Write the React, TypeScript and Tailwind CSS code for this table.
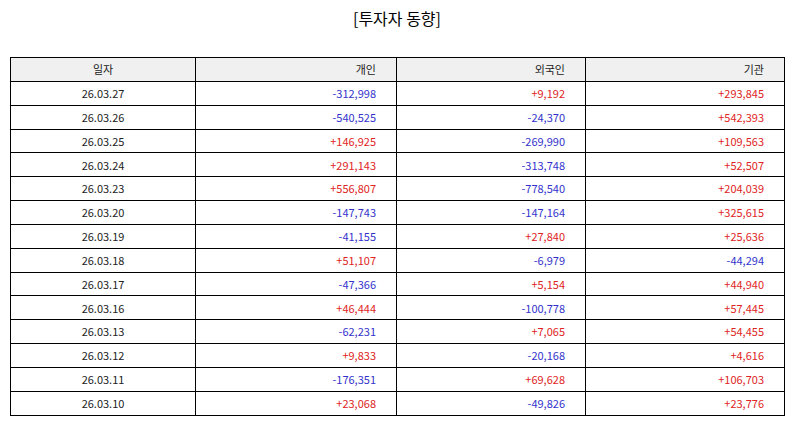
import React from "react";

const rows: [string, string, string, string][] = [
  ["26.03.27", "-312,998", "+9,192", "+293,845"],
  ["26.03.26", "-540,525", "-24,370", "+542,393"],
  ["26.03.25", "+146,925", "-269,990", "+109,563"],
  ["26.03.24", "+291,143", "-313,748", "+52,507"],
  ["26.03.23", "+556,807", "-778,540", "+204,039"],
  ["26.03.20", "-147,743", "-147,164", "+325,615"],
  ["26.03.19", "-41,155", "+27,840", "+25,636"],
  ["26.03.18", "+51,107", "-6,979", "-44,294"],
  ["26.03.17", "-47,366", "+5,154", "+44,940"],
  ["26.03.16", "+46,444", "-100,778", "+57,445"],
  ["26.03.13", "-62,231", "+7,065", "+54,455"],
  ["26.03.12", "+9,833", "-20,168", "+4,616"],
  ["26.03.11", "-176,351", "+69,628", "+106,703"],
  ["26.03.10", "+23,068", "-49,826", "+23,776"],
];

function Num({ v }: { v: string }) {
  const cls = v.startsWith("-") ? "text-[#3333cc]" : "text-[#e02424]";
  return (
    <td className={`border-[1.5px] border-black h-[23.85px] p-0 pr-[20px] text-right ${cls}`}>{v}</td>
  );
}

export default function App() {
  return (
    <div
      className="w-[794px] h-[425px] bg-white px-[10px] pt-[6px]"
      style={{ fontFamily: '"Noto Sans CJK KR", "Noto Sans", sans-serif' }}
    >
      <div className="text-center text-[16px] leading-[24px] text-black">[투자자 동향]</div>
      <table className="mt-[27px] w-[774px] border-collapse table-fixed text-[11px] text-[#222]">
        <colgroup>
          <col className="w-[185px]" />
          <col className="w-[201px]" />
          <col className="w-[189px]" />
          <col className="w-[199px]" />
        </colgroup>
        <thead>
          <tr className="bg-[#f0f0f0]">
            <th className="border-[1.5px] border-black h-[23.85px] p-0 font-normal text-center">일자</th>
            <th className="border-[1.5px] border-black h-[23.85px] p-0 pr-[20px] font-normal text-right">개인</th>
            <th className="border-[1.5px] border-black h-[23.85px] p-0 pr-[20px] font-normal text-right">외국인</th>
            <th className="border-[1.5px] border-black h-[23.85px] p-0 pr-[20px] font-normal text-right">기관</th>
          </tr>
        </thead>
        <tbody>
          {rows.map((r) => (
            <tr key={r[0]}>
              <td className="border-[1.5px] border-black h-[23.85px] p-0 text-center">{r[0]}</td>
              <Num v={r[1]} />
              <Num v={r[2]} />
              <Num v={r[3]} />
            </tr>
          ))}
        </tbody>
      </table>
    </div>
  );
}
